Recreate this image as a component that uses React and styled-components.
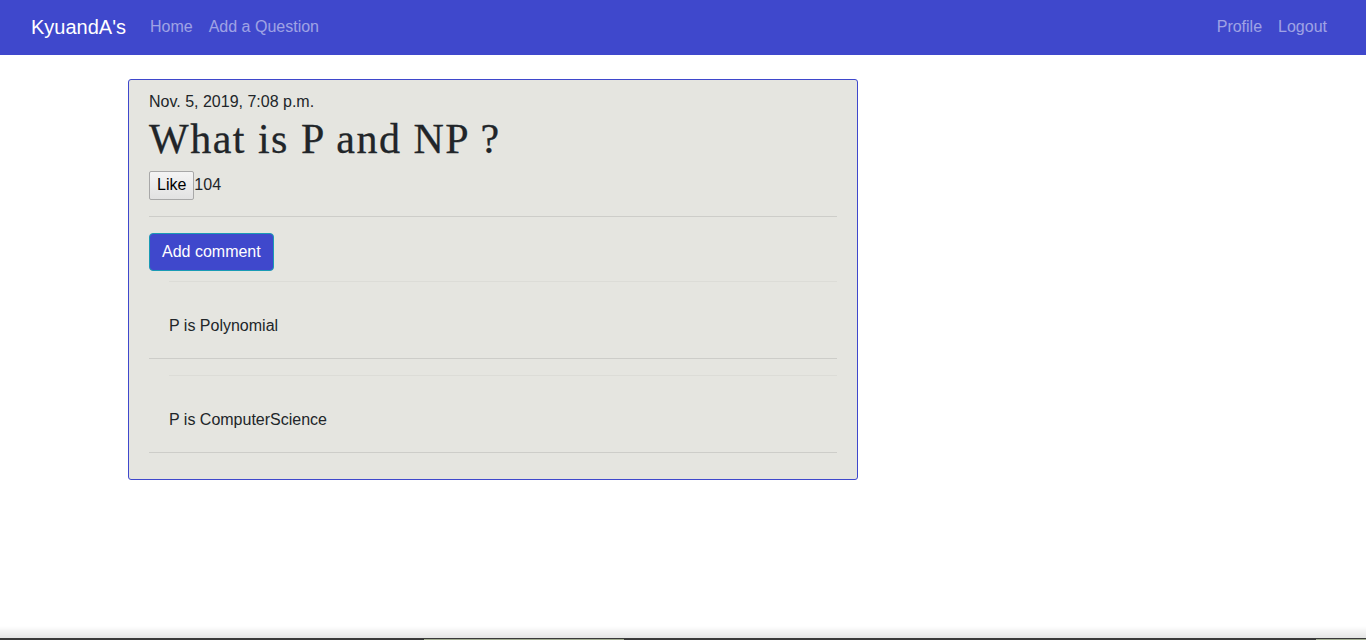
import React from "react";
import styled, { createGlobalStyle } from "styled-components";

const Global = createGlobalStyle`
  html, body { margin: 0; padding: 0; background: #fff; }
  body {
    font-family: "Liberation Sans", Arial, sans-serif;
    font-size: 16px;
    line-height: 1.5;
    color: #212529;
    min-height: 640px;
  }
  * { box-sizing: border-box; }
`;

const Navbar = styled.nav`
  height: 55px;
  background: #3f48cc;
  display: flex;
  align-items: center;
  padding: 0 31px 2px 31px;
`;

const Brand = styled.a`
  color: #fff;
  font-size: 20px;
  line-height: 30px;
  margin-right: 16px;
  text-decoration: none;
`;

const NavGroup = styled.div`
  display: flex;
  align-items: center;
  margin-left: ${(p) => (p.$right ? "auto" : "0")};
`;

const NavLink = styled.a`
  color: rgba(255, 255, 255, 0.5);
  font-size: 16px;
  padding: 0 8px;
  text-decoration: none;
`;

const Card = styled.article`
  margin: 24px 0 0 128px;
  width: 730px;
  background: #e5e5e0;
  border: 1px solid #3f48cc;
  border-radius: 3px;
  padding: 10px 20px 26px;
`;

const DateLine = styled.div`
  font-size: 16px;
  line-height: 24px;
`;

const Title = styled.h1`
  margin: 0 0 6px;
  font-family: "Liberation Serif", "Times New Roman", serif;
  font-weight: 400;
  font-size: 42px;
  line-height: 50px;
  letter-spacing: 1.5px;
  color: #212529;
  -webkit-text-stroke: 0.3px #212529;
`;

const LikeRow = styled.div`
  display: flex;
  align-items: center;
  height: 30px;
`;

const LikeButton = styled.button`
  height: 29px;
  padding: 0 7px;
  font-family: "Liberation Sans", Arial, sans-serif;
  font-size: 16px;
  color: #000;
  background: linear-gradient(#f4f4f4, #e2e2e2);
  border: 1px solid #a8a8a8;
  border-radius: 2px;
`;

const Count = styled.span`
  font-size: 16px;
`;

const Rule = styled.hr`
  border: 0;
  border-top: 1px solid rgba(0, 0, 0, 0.1);
  margin: ${(p) => p.$margin || "16px 0"};
`;

const PrimaryButton = styled.button`
  height: 38px;
  padding: 0 12px;
  background: #3f48cc;
  color: #fff;
  font-family: "Liberation Sans", Arial, sans-serif;
  font-size: 16px;
  border: 1px solid #1a9bb5;
  border-radius: 4px;
`;

const CommentList = styled.div`
  margin-top: 10px;
`;

const CommentBody = styled.div`
  margin-left: 20px;
  border-top: 1px solid rgba(0, 0, 0, 0.04);
  padding: 32px 0 20px;
  font-size: 16px;
  line-height: 24px;
`;

const TaskbarShadow = styled.div`
  position: fixed;
  left: 0;
  right: 0;
  bottom: 2px;
  height: 12px;
  background: linear-gradient(rgba(0, 0, 0, 0), rgba(0, 0, 0, 0.1));
  pointer-events: none;
`;

const Taskbar = styled.div`
  position: fixed;
  left: 0;
  right: 0;
  bottom: 0;
  height: 2px;
  background: #3a3a3a;
`;

const TaskItem = styled.div`
  position: absolute;
  bottom: 0;
  height: 1px;
  background: #a3ad92;
`;

const comments = ["P is Polynomial", "P is ComputerScience"];

export default function App() {
  return (
    <>
      <Global />
      <Navbar>
        <Brand href="#">KyuandA's</Brand>
        <NavGroup>
          <NavLink href="#">Home</NavLink>
          <NavLink href="#">Add a Question</NavLink>
        </NavGroup>
        <NavGroup $right>
          <NavLink href="#">Profile</NavLink>
          <NavLink href="#">Logout</NavLink>
        </NavGroup>
      </Navbar>
      <Card>
        <DateLine>Nov. 5, 2019, 7:08 p.m.</DateLine>
        <Title>What is P and NP ?</Title>
        <LikeRow>
          <LikeButton>Like</LikeButton>
          <Count>104</Count>
        </LikeRow>
        <Rule />
        <PrimaryButton>Add comment</PrimaryButton>
        <CommentList>
          {comments.map((c, i) => (
            <div key={c}>
              <CommentBody>{c}</CommentBody>
              <Rule $margin={i === comments.length - 1 ? "0" : "0 0 16px"} />
            </div>
          ))}
        </CommentList>
      </Card>
      <TaskbarShadow />
      <Taskbar>
        <TaskItem style={{ left: 424, width: 200 }} />
        <TaskItem style={{ left: 1316, width: 50 }} />
      </Taskbar>
    </>
  );
}
